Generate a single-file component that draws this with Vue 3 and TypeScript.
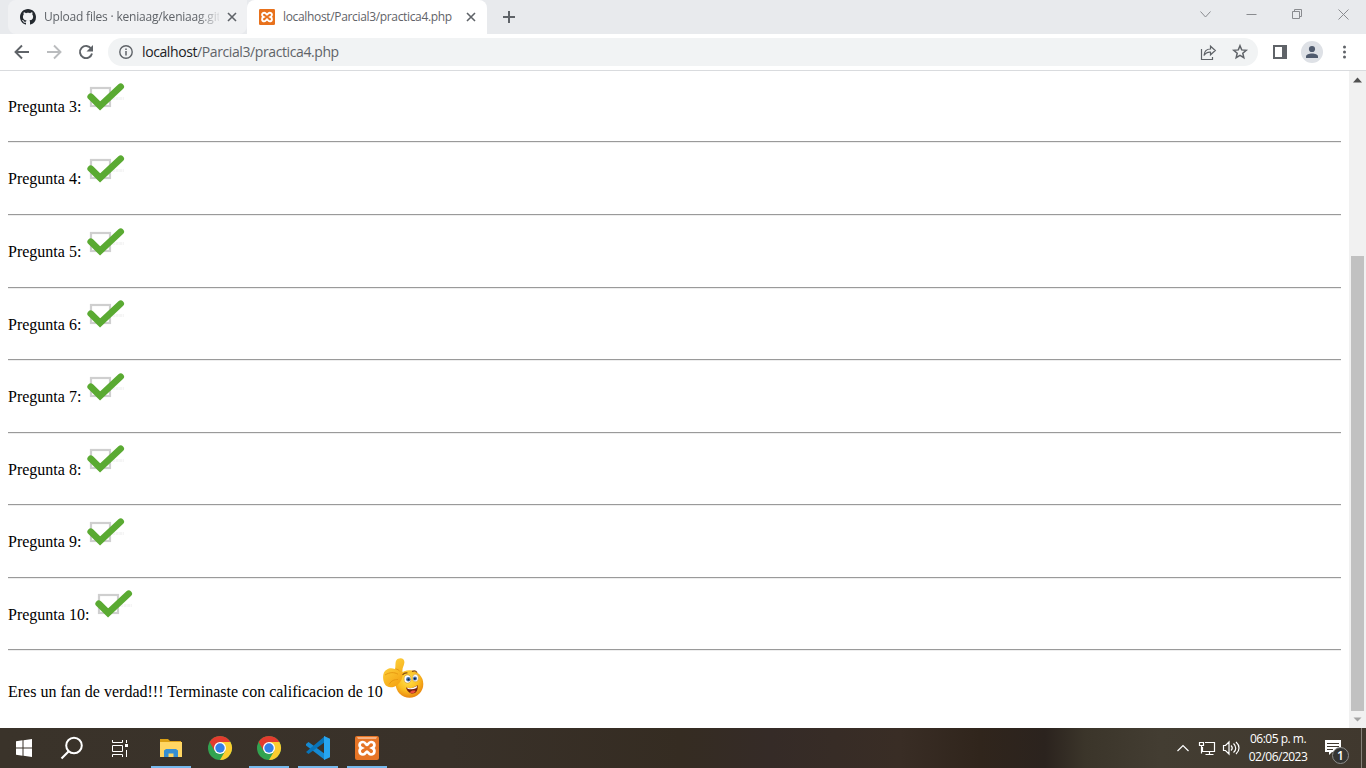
<script setup lang="ts">
const questions: number[] = [3, 4, 5, 6, 7, 8, 9, 10]
const browsers: { id: string; open: boolean }[] = [
  { id: 'chrome-a', open: false },
  { id: 'chrome-b', open: true },
]
</script>

<template>
  <div class="screen">
    <header class="tabs">
      <div class="tab idle">
        <svg class="fav" viewBox="0 0 16 16"><path fill="#24292f" d="M8 0C3.58 0 0 3.58 0 8c0 3.54 2.29 6.53 5.47 7.59.4.07.55-.17.55-.38 0-.19-.01-.82-.01-1.49-2.01.37-2.53-.49-2.69-.94-.09-.23-.48-.94-.82-1.13-.28-.15-.68-.52-.01-.53.63-.01 1.08.58 1.23.82.72 1.21 1.87.87 2.33.66.07-.52.28-.87.51-1.07-1.78-.2-3.64-.89-3.64-3.95 0-.87.31-1.59.82-2.15-.08-.2-.36-1.02.08-2.12 0 0 .67-.21 2.2.82.64-.18 1.32-.27 2-.27s1.36.09 2 .27c1.53-1.04 2.2-.82 2.2-.82.44 1.1.16 1.92.08 2.12.51.56.82 1.27.82 2.15 0 3.07-1.87 3.75-3.65 3.95.29.25.54.73.54 1.48 0 1.07-.01 1.93-.01 2.2 0 .21.15.46.55.38A8.01 8.01 0 0 0 16 8c0-4.42-3.58-8-8-8z" /></svg>
        <span class="title long">Upload files · keniaag/keniaag.git</span>
        <svg class="close" viewBox="0 0 10 10"><path d="M1 1l8 8M9 1L1 9" /></svg>
      </div>
      <div class="tab active">
        <svg class="fav" viewBox="0 0 24 24"><rect width="24" height="24" rx="2" fill="#e8711c" /><path d="M8 5.500c-4 0-4.500 5-1.300 6.500C3.500 13.500 4 18.500 8 18.500c2.500 0 3-3 4-3s1.500 3 4 3c4 0 4.500-5 1.300-6.500 3.200-1.500 2.700-6.500-1.300-6.500-2.500 0-3 3-4 3s-1.500-3-4-3z" fill="none" stroke="#fff" stroke-width="2.900" /></svg>
        <span class="title">localhost/Parcial3/practica4.php</span>
        <svg class="close" viewBox="0 0 10 10"><path d="M1 1l8 8M9 1L1 9" /></svg>
      </div>
      <svg class="plus" viewBox="0 0 12 12"><path d="M6 0v12M0 6h12" /></svg>
      <svg class="window" viewBox="0 0 166 34"><path d="M.5 11.500l5 5.500 5-5.500M46.500 14.500h10M92.500 11.500h7v7h-7zM94.500 11.500v-2h7v7h-2M138.500 9.500l10 10M148.500 9.500l-10 10" /></svg>
    </header>

    <div class="toolbar">
      <svg class="nav" viewBox="0 0 108 36" fill="none" stroke-width="1.900">
        <path stroke="#5f6368" d="M29 18H16M22 11.500L15.500 18l6.500 6.500" />
        <path stroke="#babcbe" d="M47 18h13M54 11.500l6.500 6.500-6.500 6.500" />
        <path stroke="#5f6368" d="M91.200 14.700A6.100 6.100 0 1 0 92 19.500" /><path fill="#5f6368" d="M93 11v6.500h-6.500z" />
      </svg>
      <div class="address">
        <svg class="info" viewBox="0 0 14 14"><circle cx="7" cy="7" r="6.200" fill="none" stroke="#5f6368" stroke-width="1.400" /><path d="M7 6v4.500M7 3.500V5" stroke="#5f6368" stroke-width="1.500" /></svg>
        <span class="url"><b>localhost</b>/Parcial3/practica4.php</span>
        <svg class="actions" viewBox="0 0 44 18" fill="none" stroke="#5f6368">
          <path stroke-width="1.200" d="M1.500 6v10.500h11V14M4 12.500c.3-4 2.500-6.500 6.500-6.500V3.200l4.800 4.300-4.800 4.300V9.200C7.500 9 5.500 10 4 12.500z" />
          <path stroke-width="1.500" d="M40 2.800l1.700 4.100 4.500.4-3.400 2.900 1 4.400-3.800-2.300-3.800 2.300 1-4.400-3.400-2.900 4.500-.4z" />
        </svg>
      </div>
      <svg class="menu" viewBox="0 0 108 36">
        <path d="M15 11h14v14H15zM17 13v10h7V13z" fill="#5f6368" fill-rule="evenodd" />
        <circle cx="54" cy="18" r="11" fill="#dee1e6" /><circle cx="54" cy="15" r="3.100" fill="#505b6e" /><path d="M48 24v-1.500c0-4 12-4 12 0V24z" fill="#505b6e" />
        <g fill="#5f6368"><circle cx="86.500" cy="13" r="1.500" /><circle cx="86.500" cy="18" r="1.500" /><circle cx="86.500" cy="23" r="1.500" /></g>
      </svg>
    </div>

    <div class="viewport">
      <main>
        <div v-for="q in questions" :key="q" class="question">
          <span>Pregunta {{ q }}:</span>
          <svg class="check" viewBox="0 0 42 30">
            <rect x="5" y="6" width="19" height="18" fill="#fff" stroke="#cfcfcf" stroke-width="2.200" />
            <path d="M26 16.500h12" stroke="#f5f5f5" stroke-width="3" stroke-dasharray="3 .6" />
            <path d="M4.700 14.700l9.400 9.200L34.700 4.700" fill="none" stroke="#5aaa32" stroke-width="6.600" stroke-linecap="round" />
          </svg>
        </div>
        <div class="result">
          <span>Eres un fan de verdad!!! Terminaste con calificacion de 10</span>
          <svg class="emoji" viewBox="0 0 42 42">
            <defs>
              <radialGradient id="face" cx=".45" cy=".35" r=".65"><stop offset="0" stop-color="#ffe44d" /><stop offset=".6" stop-color="#fbbd20" /><stop offset="1" stop-color="#e9860f" /></radialGradient>
              <linearGradient id="hand" x2=".6" y2="1"><stop offset="0" stop-color="#ffdd45" /><stop offset="1" stop-color="#f5a414" /></linearGradient>
            </defs>
            <circle cx="26.500" cy="26" r="13.800" fill="url(#face)" />
            <path d="M12 11c1-3-.5-8 2.500-10 4-2 7.500 0 6.800 4-.4 3-2.300 5.500-1.800 8.500 1 5-1 10-5 13.500-5 3.500-11 3-13-1.500C-.5 21-1 14 4 11.500c2-1.500 5-1.500 8-.5z" fill="url(#hand)" />
            <path d="M12.500 11c2 0 3.500 1.200 4.500 2.500M2 17c5-3 9-3 13-.8M6 26.500c2.500-4 5-5 9-5" fill="none" stroke="#e2920e" stroke-width=".8" />
            <g fill="#fff" stroke="#bd8323" stroke-width=".5"><ellipse cx="24.500" cy="21" rx="3.400" ry="4.100" /><ellipse cx="32.500" cy="20" rx="3" ry="3.700" /></g>
            <g fill="#3d70b5"><circle cx="25.300" cy="21.300" r="2.200" /><circle cx="32" cy="20.500" r="2" /></g><g fill="#152235"><circle cx="25.500" cy="21.500" r="1" /><circle cx="31.800" cy="20.700" r="1" /></g>
            <path d="M19.500 17c1.500-2 3-2.500 5-2M29 13.500c2-1 4-.5 5 1" fill="none" stroke="#8b4b0c" stroke-width="1.200" />
            <path d="M23 29.500c4 1.500 8.500.5 11.500-2.500 1 5-1.500 8.500-5 8.500-3 0-5.500-2.500-6.500-6z" fill="#75200e" /><path d="M24 29.700c3.500 1 7 .2 10-2l-.4 2.200c-3 1.500-6 1.800-8.900.8z" fill="#fff" /><path d="M27 34.500c1-2 4-2.500 5.700-1.500-1.200 2.500-4 3-5.700 1.500z" fill="#ed4f3f" />
          </svg>
        </div>
      </main>
      <aside class="scroll">
        <svg viewBox="0 0 17 17"><path d="M4 11.500l4.500-5 4.500 5z" fill="#505050" /></svg>
        <div class="thumb"></div>
        <svg class="down" viewBox="0 0 17 17"><path d="M4.500 6.500h8l-4 4z" fill="#a3a3a3" /></svg>
      </aside>
    </div>

    <footer class="taskbar">
      <div class="item start"><svg viewBox="0 0 48 40"><path fill="#fff" d="M16 13.200l6.500-.9v7.200H16zM23.500 12.200l8.500-1.200v8.500h-8.500zM16 20.500h6.500v7.200l-6.500-.9zM23.500 20.500H32V29l-8.500-1.200z" /></svg></div>
      <div class="item start"><svg viewBox="0 0 48 40" fill="none" stroke="#fff"><circle cx="26" cy="17.500" r="7.800" stroke-width="2" /><path d="M20.500 23.500L13.500 30.500" stroke-width="2.200" /></svg></div>
      <div class="item start"><svg viewBox="0 0 48 40" fill="none" stroke="#fff"><path stroke-width="1" d="M16.500 12v2.500h10V12M16.500 17.500h10v6h-10zM16.500 29v-2.500h10V29M30.500 12v3M30.500 22v7" /><path fill="#fff" stroke="none" d="M29 16h3v3h-3z" /></svg></div>
      <div class="item first open"><svg viewBox="0 0 48 40"><path d="M13 11h8l2 2h11v3H13z" fill="#dba015" /><path d="M13 14h22v15H13z" fill="#ffd663" /><path d="M17 29v-6.500l2-1.500h10l2 1.500V29h-4.500v-3.500h-5V29z" fill="#368fd3" /></svg></div>
      <div v-for="b in browsers" :key="b.id" class="item" :class="{ open: b.open }">
        <svg viewBox="0 0 48 40"><circle cx="24" cy="20" r="12" fill="#32a350" /><path d="M13.600 14A12 12 0 0 1 34.400 14H24L18.800 23z" fill="#e33b2e" /><path d="M34.400 14A12 12 0 0 1 24 32L29.200 23 24 14z" fill="#fccd2f" /><circle cx="24" cy="20" r="6" fill="#fff" /><circle cx="24" cy="20" r="4.700" fill="#347fe8" /></svg>
      </div>
      <div class="item open"><svg viewBox="0 0 48 40"><path d="M12 16l2.500-2L31 26v6L12 17.500z" fill="#168ad2" /><path d="M12 24L31 8v6L14.500 26 12 24z" fill="#0874b9" /><path d="M30 8l6 2.700v18.600L30 32z" fill="#27a5f0" /></svg></div>
      <div class="item open"><svg viewBox="0 0 48 40"><rect x="12" y="8" width="24" height="24" rx="2" fill="#e67425" /><path d="M14 9h20l-1 2H15z" fill="#f5b183" /><path d="M20 14c-4 0-4.500 4.500-1.300 6-3.200 1.500-2.700 6.500 1.300 6.500 2.500 0 3-3 4-3s1.500 3 4 3c4 0 4.500-5 1.300-6.500 3.200-1.500 2.700-6-1.300-6-2.500 0-3 3-4 3s-1.500-3-4-3z" fill="none" stroke="#fff" stroke-width="2.700" /></svg></div>
      <div class="tray">
        <svg class="trayicons" viewBox="0 0 68 40" fill="none" stroke="#fff" stroke-width="1.200"><path d="M1.500 23l5.500-5.500 5.500 5.500M29 14.500h9.500v9H26.500V19M33.500 23.500v3M29.500 26.500h8M23.500 14.500h4v3h-4zM25.500 17.500v8M47.500 17.500h2l3.500-3.500v12l-3.500-3.500h-2zM55 17.500c1.500 1.500 1.500 3.500 0 5M57.500 15.500c3 3 3 6.500 0 9M60 14c4 3.500 4 8.500 0 12" /></svg>
        <div class="clock"><span>06:05 p. m.</span><span>02/06/2023</span></div>
        <svg class="notice" viewBox="0 0 30 40"><path d="M3 12h16v12H10l-3 3v-3H3z" fill="#fff" /><path d="M5 15.500h12M5 18.500h12M5 21.500h6" stroke="#40392f" /><circle cx="18.500" cy="27.500" r="8" fill="#353533" stroke="#8e8e8c" /><text x="18.500" y="32" text-anchor="middle" fill="#fff" font-family="Open Sans, sans-serif" font-size="12" font-weight="600">1</text></svg>
        <i class="edge"></i>
      </div>
    </footer>
  </div>
</template>

<style>
body { margin: 0; overflow: hidden; }
</style>
<style scoped>
.screen { width: 1366px; height: 768px; display: flex; flex-direction: column; background: #fff; overflow: hidden; }
svg { display: block; flex: none; }
.tabs { height: 34px; flex: none; display: flex; background: #e8eaed; font: 12px/34px "Open Sans", sans-serif; color: #5f6368; }
.tab { box-sizing: border-box; display: flex; align-items: center; height: 34px; }
.idle { width: 239px; margin-left: 8px; padding-left: 12px; background: #f0f1f3; border-radius: 8px 0 8px 8px; }
.active { width: 240px; padding-left: 12px; background: #fff; border-radius: 8px 8px 0 0; }
.fav { width: 16px; height: 16px; margin-right: 8px; }
.title { width: 175px; white-space: nowrap; letter-spacing: -.34px; }
.long { mask-image: linear-gradient(90deg, #000 153px, transparent 178px); letter-spacing: -.2px; }
.close { width: 10px; height: 10px; margin-left: 8px; fill: none; stroke: #5f6368; stroke-width: 1.6; }
.plus { width: 12px; height: 12px; margin: 11px auto 0 16px; stroke: #5f6368; stroke-width: 2; }
.window { width: 166px; height: 34px; fill: none; stroke: #898b8f; }
.toolbar { height: 36px; flex: none; display: flex; align-items: center; border-bottom: 1px solid #d9dbde; }
.nav { width: 108px; height: 36px; }
.address { width: 1150px; height: 28px; border-radius: 14px; background: #f1f3f4; display: flex; align-items: center; }
.info { width: 14px; height: 14px; margin: 0 9px 0 11px; }
.url { font: 14px/28px "Open Sans", sans-serif; letter-spacing: -.4px; color: #5f6368; flex: 1; }
.url b { font-weight: 400; color: #202124; }
.actions { width: 44px; height: 18px; overflow: visible; margin-right: 14px; }
.menu { width: 108px; height: 36px; }
.viewport { height: 657px; flex: none; display: flex; overflow: hidden; }
main { width: 1333px; padding-left: 8px; font: 16px/18px "Liberation Serif", serif; color: #000; }
.question { box-sizing: border-box; height: 72.57px; display: flex; align-items: flex-start; border-bottom: 1px solid #eee; box-shadow: inset 0 -1px #9a9a9a; }
.question:first-child { height: 72.45px; }
.question span { margin-top: 27px; }
.check { width: 42px; height: 30px; margin: 10.500px 0 0 5px; }
.result { display: flex; align-items: flex-start; }
.result span { margin-top: 31.500px; }
.emoji { width: 42px; height: 42px; margin-top: 6.500px; }
.scroll { width: 17px; margin-left: 8px; display: flex; flex-direction: column; background: #f1f1f1; }
.scroll svg { width: 17px; height: 17px; }
.thumb { width: 13px; height: 455px; margin: 168px 0 0 2px; background: #c1c1c1; }
.scroll .down { margin-top: auto; }
.taskbar { height: 40px; flex: none; display: flex; background: linear-gradient(90deg, #3a332a 0, #393129 450px, #352c22 680px, #352b27 770px, #392d25 900px, #30251c 980px, #2b231e 1045px, #3b352a 1085px, #433d32 1160px, #40382e 1366px); }
.item { box-sizing: border-box; width: 40px; height: 40px; margin-right: 9px; display: flex; justify-content: center; }
.start { width: 48px; margin: 0; }
.first { margin-left: 7px; }
.open { border-bottom: 2px solid #76b9ed; }
.item svg { width: 48px; height: 40px; }
.tray { margin-left: auto; display: flex; }
.trayicons { width: 68px; height: 40px; }
.clock { width: 68px; display: flex; flex-direction: column; align-items: center; padding-top: 2px; font: 12px/18px "Open Sans", sans-serif; letter-spacing: -.5px; color: #fff; white-space: nowrap; }
.notice { width: 30px; height: 40px; margin-left: 10px; }
.edge { width: 1px; margin: 0 4px 0 9px; background: #86817a; }
</style>
